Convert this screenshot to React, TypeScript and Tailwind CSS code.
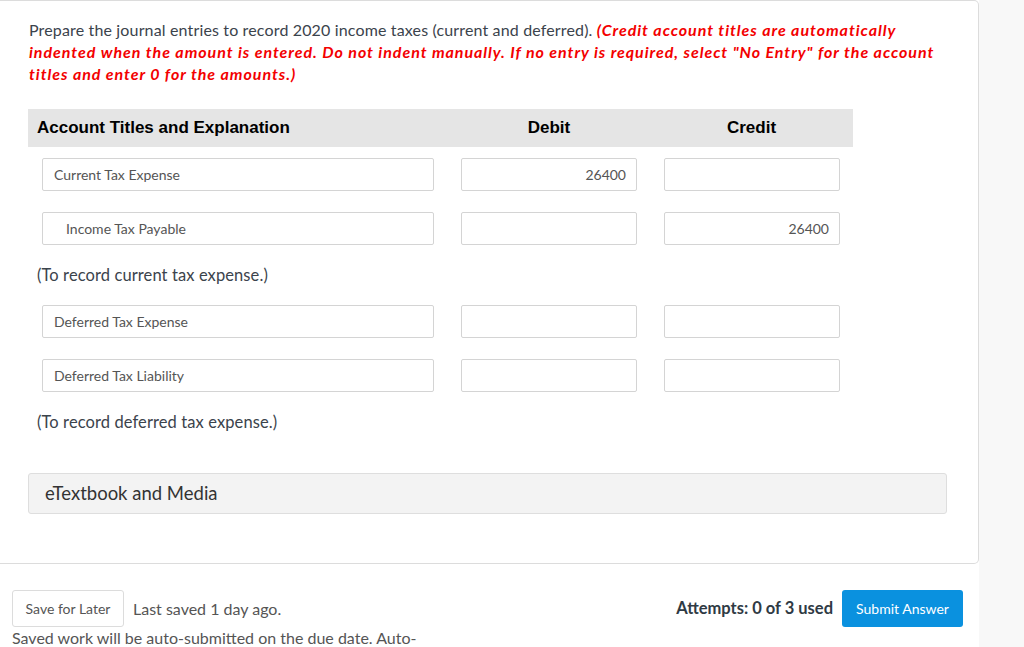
import React from 'react';

const rows = [
  [
    { account: 'Current Tax Expense', indent: false, debit: '26400', credit: '' },
    { account: 'Income Tax Payable', indent: true, debit: '', credit: '26400' },
  ],
  [
    { account: 'Deferred Tax Expense', indent: false, debit: '', credit: '' },
    { account: 'Deferred Tax Liability', indent: false, debit: '', credit: '' },
  ],
];

const memos = ['(To record current tax expense.)', '(To record deferred tax expense.)'];

function Field({ value, right, indent }: { value: string; right?: boolean; indent?: boolean }) {
  return (
    <div
      className={`h-[33px] border border-[#d4d4d4] rounded-[2px] bg-white flex items-center text-[14px] text-[#555] ${
        right ? 'justify-end pr-[10px]' : indent ? 'pl-[23px]' : 'pl-[11px]'
      }`}
    >
      {value}
    </div>
  );
}

export default function App() {
  return (
    <div className="flex w-[1024px] h-[647px] overflow-hidden bg-white font-['Lato',sans-serif]">
      <main className="w-[979px] shrink-0">
        {/* Carta de la pregunta */}
        <section className="h-[564px] border-t border-r border-b border-[#dcdcdc] rounded-r-[5px] pl-[28px] pt-[18px]">
          <p className="pl-px pr-[28px] text-[16px] leading-[22px] tracking-[0.15px] text-[#3b434c]">
            Prepare the journal entries to record 2020 income taxes (current and deferred).{' '}
            <span className="font-bold italic tracking-[0.95px] text-[#f30000]">
              (Credit account titles are automatically indented when the amount is entered. Do not indent manually. If no
              entry is required, select "No Entry" for the account titles and enter 0 for the amounts.)
            </span>
          </p>

          <div className="mt-[24px] w-[825px]">
            <div className="grid grid-cols-[420px_202px_203px] h-[38px] items-center bg-[#e5e5e5] font-['Liberation_Sans',sans-serif] font-bold text-[17px] text-black">
              <div className="pl-[9px]">Account Titles and Explanation</div>
              <div className="text-center">Debit</div>
              <div className="text-center">Credit</div>
            </div>

            {rows.map((group, g) => (
              <div key={g} className={g === 0 ? 'mt-[11px]' : ''}>
                <div className="flex flex-col gap-[21px]">
                  {group.map((r) => (
                    <div key={r.account} className="grid grid-cols-[420px_202px_203px]">
                      <div className="pl-[14px] pr-[14px]">
                        <Field value={r.account} indent={r.indent} />
                      </div>
                      <div className="pl-[13px] pr-[13px]">
                        <Field value={r.debit} right />
                      </div>
                      <div className="pl-[14px] pr-[13px]">
                        <Field value={r.credit} right />
                      </div>
                    </div>
                  ))}
                </div>
                <p className="pl-[9px] my-[19px] text-[16.5px] leading-[22px] tracking-[0.1px] text-[#3b434c]">{memos[g]}</p>
              </div>
            ))}
          </div>

          <div className="mt-[40px] w-[919px] h-[41px] flex items-center pl-[16px] bg-[#f3f3f3] border border-[#dedede] rounded-[3px] text-[18.5px] text-[#333]">
            eTextbook and Media
          </div>
        </section>

        {/* Pie */}
        <div className="pl-[12px] pr-[16px] pt-[26px]">
          <div className="flex items-center">
            <button className="h-[37px] w-[112px] border border-[#dcdcdc] rounded-[3px] bg-white text-[14px] text-[#555]">
              Save for Later
            </button>
            <span className="ml-[9px] text-[16px] text-[#555]">Last saved 1 day ago.</span>
            <span className="ml-auto font-bold text-[16.5px] text-[#2f3a44]">Attempts: 0 of 3 used</span>
            <button className="ml-[9px] h-[37px] w-[121px] rounded-[3px] bg-[#0a91df] text-white text-[14px]">
              Submit Answer
            </button>
          </div>
          <p className="mt-[1px] text-[16px] leading-[20px] text-[#555]">
            Saved work will be auto-submitted on the due date. Auto-
          </p>
        </div>
      </main>
      <aside className="flex-1 bg-[#f8f8f8]" />
    </div>
  );
}
